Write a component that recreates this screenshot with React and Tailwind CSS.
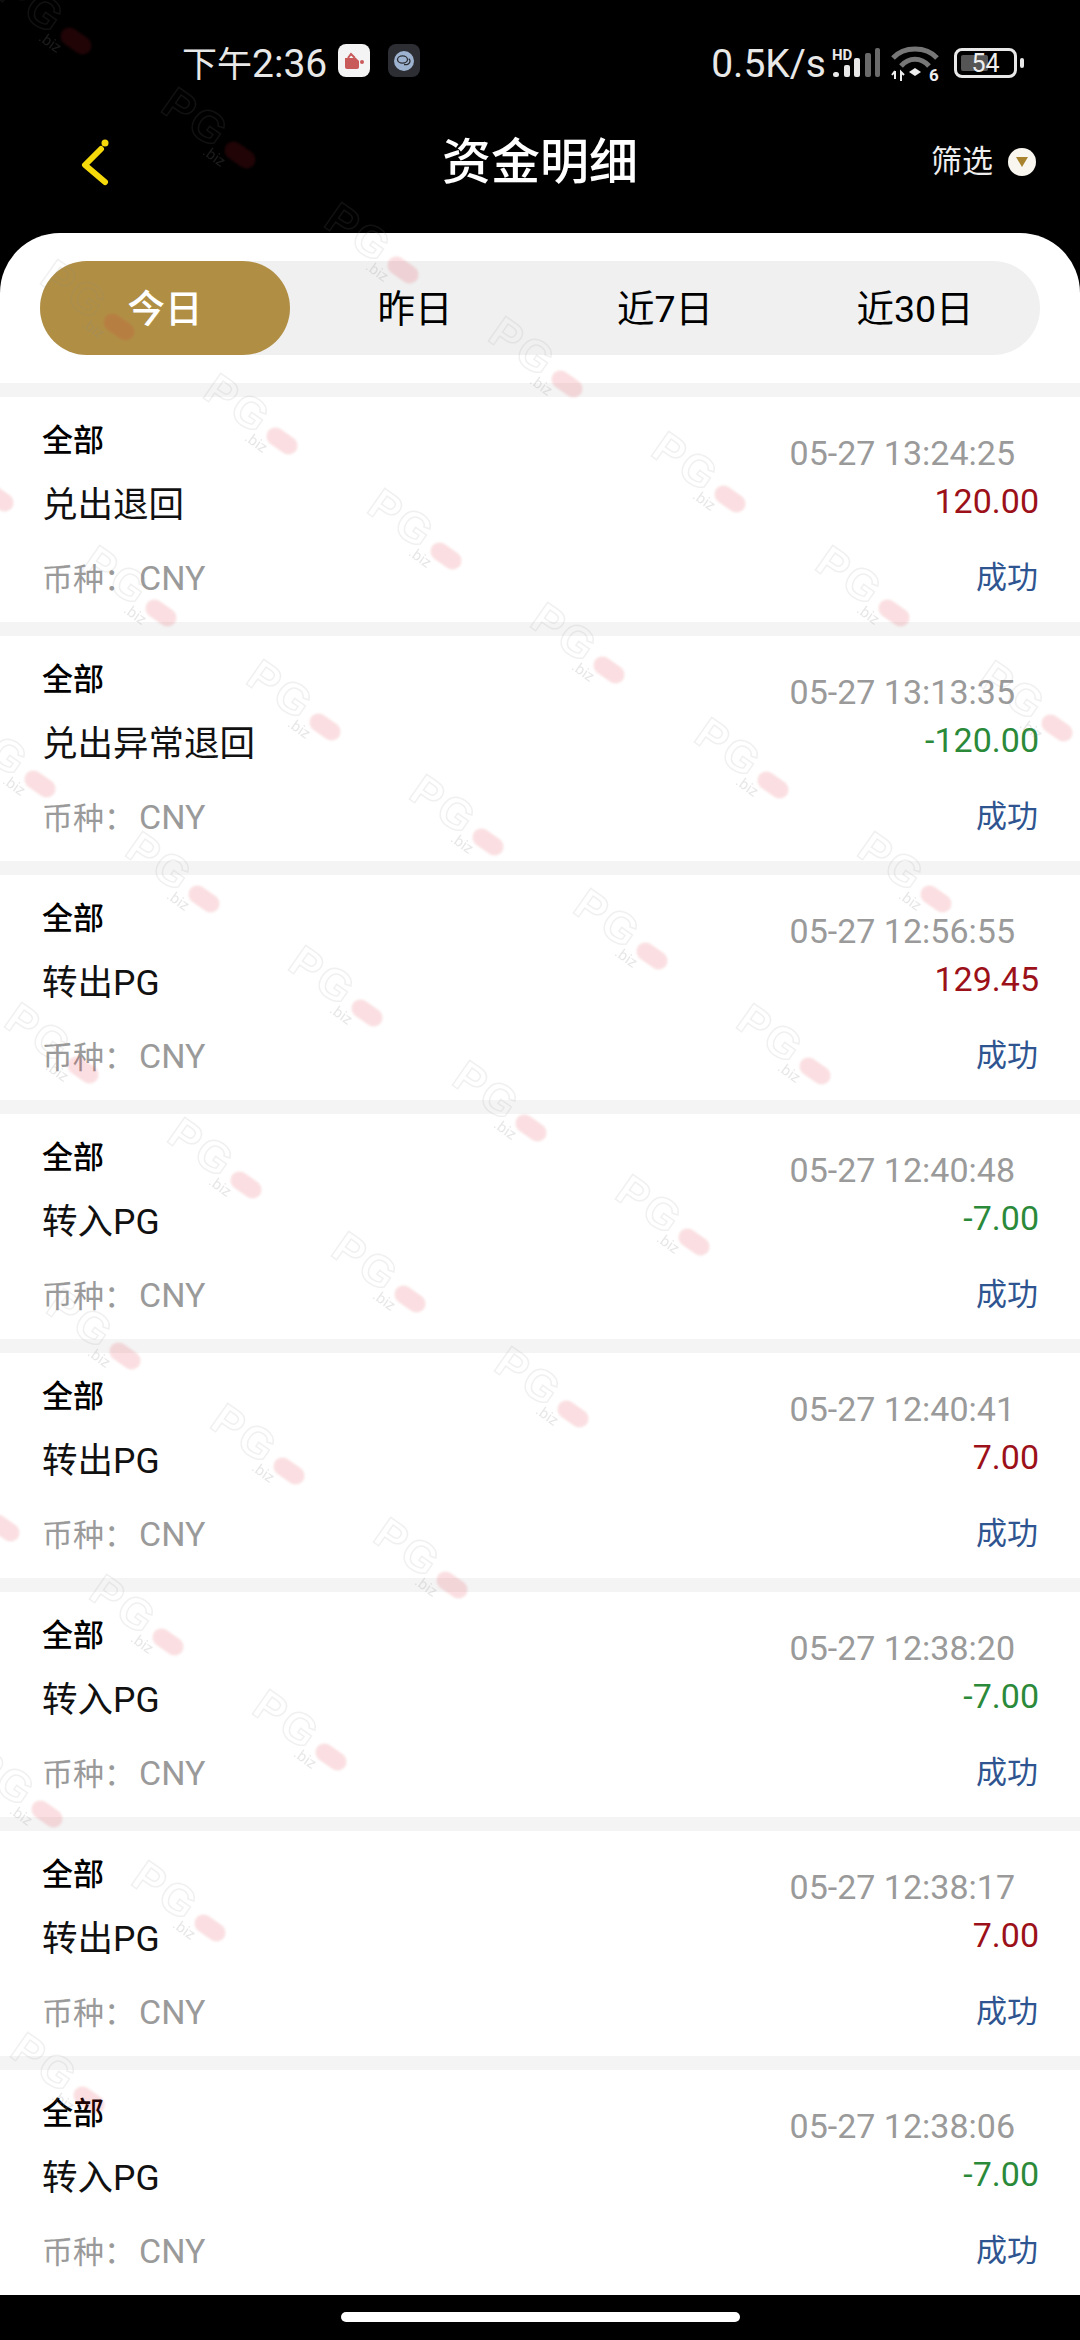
const tabs = ["今日", "昨日", "近7日", "近30日"];

const registros = [
  { tipo: "兑出退回", fecha: "05-27 13:24:25", monto: "120.00" },
  { tipo: "兑出异常退回", fecha: "05-27 13:13:35", monto: "-120.00" },
  { tipo: "转出PG", fecha: "05-27 12:56:55", monto: "129.45" },
  { tipo: "转入PG", fecha: "05-27 12:40:48", monto: "-7.00" },
  { tipo: "转出PG", fecha: "05-27 12:40:41", monto: "7.00" },
  { tipo: "转入PG", fecha: "05-27 12:38:20", monto: "-7.00" },
  { tipo: "转出PG", fecha: "05-27 12:38:17", monto: "7.00" },
  { tipo: "转入PG", fecha: "05-27 12:38:06", monto: "-7.00" },
];

// watermark block: 7 x 9 rotated grid, x/y are the red pill centres
const marcas = [];
for (let m = -2; m <= 4; m++) {
  for (let n = -1; n <= 7; n++) {
    const x = 282 + 163.5 * m - 121 * n;
    const y = 441 + 114.5 * m + 171.5 * n;
    if (x > -40 && x < 1180 && y > -40 && y < 2296) marcas.push({ x, y });
  }
}

function Marca({ x, y }) {
  return (
    <div className="absolute w-0 h-0 rotate-[35deg]" style={{ left: x, top: y }}>
      <span className="absolute left-[-92px] top-[-27px] text-[44px] leading-[44px] font-bold font-['Liberation_Sans',sans-serif] text-transparent tracking-[3px] opacity-[0.12] [-webkit-text-stroke:1.5px_#888]">
        PG
      </span>
      <span className="absolute left-[-17px] top-[-9px] w-[34px] h-[18px] rounded-full bg-[#e02030] opacity-[0.14] blur-[1px]" />
      <span className="absolute left-[-32px] top-[9px] text-[15px] leading-[15px] text-[#888] opacity-[0.2]">
        .biz
      </span>
    </div>
  );
}

function BarraEstado() {
  return (
    <div className="h-[126px] flex justify-between pt-[44px] pl-[182px] pr-[56px] text-[#e8e8e8]">
      <div className="flex items-start">
        <span className="text-[35px] leading-[40px]">
          下午<span className="text-[39px]">2:36</span>
        </span>
        <div className="ml-[11px] w-[32px] h-[33px] rounded-[8px] bg-[#f4f4f4] flex items-center justify-center">
          <svg width="22" height="20" viewBox="0 0 22 20">
            <path d="M2 7h11l3 3v6a2 2 0 0 1-2 2H4a2 2 0 0 1-2-2z" fill="#c95a5a" />
            <path d="M5 7l3-4 4 4" fill="none" stroke="#c95a5a" strokeWidth="2" />
            <circle cx="19" cy="11" r="2" fill="#c95a5a" />
          </svg>
        </div>
        <div className="ml-[18px] w-[32px] h-[33px] rounded-[8px] bg-[#2c2e33] flex items-center justify-center">
          <svg width="22" height="22" viewBox="0 0 22 22">
            <circle cx="11" cy="11" r="10" fill="#9db2cf" />
            <ellipse cx="9.5" cy="9.5" rx="5" ry="3.6" fill="none" stroke="#2c2e33" strokeWidth="1.3" />
            <path d="M11 14.5c3 .6 6-.6 6-3.3 0-1-.5-1.800-1.300-2.400" fill="none" stroke="#2c2e33" strokeWidth="1.300" />
          </svg>
        </div>
      </div>
      <div className="flex items-start">
        <span className="text-[39px] leading-[40px]">0.5K/s</span>
        <svg width="50" height="38" viewBox="0 0 50 38" className="ml-[4px] mt-[3px]">
          <text x="2" y="13" fontSize="15" fontWeight="700" fill="#e8e8e8" fontFamily="Roboto, sans-serif">HD</text>
          <rect x="3" y="25" width="6" height="5" rx="2.500" fill="#e8e8e8" />
          <rect x="14" y="18" width="6" height="12" rx="2" fill="#e8e8e8" />
          <rect x="24" y="11" width="6" height="19" rx="2" fill="#e8e8e8" />
          <rect x="35" y="6" width="6" height="24" rx="2" fill="#6a6a6a" />
          <rect x="45" y="1" width="5" height="29" rx="2" fill="#6a6a6a" />
        </svg>
        <svg width="50" height="38" viewBox="0 0 50 38" className="ml-[11px] mt-[1px]">
          <path d="M2 13C13 1 35 1 46 13" fill="none" stroke="#777" strokeWidth="5" />
          <path d="M10 21C18 12 30 12 38 21" fill="none" stroke="#777" strokeWidth="5" />
          <path d="M24 23l6 4-6 4-6-4z" fill="#eee" />
          <path d="M4 26v8M1 30l3-4M10 36v-9l3 3" fill="none" stroke="#eee" strokeWidth="2" />
          <text x="38" y="36" fontSize="17" fontWeight="700" fill="#eee" fontFamily="Roboto, sans-serif">6</text>
        </svg>
        <div className="ml-[13px] mt-[4px] w-[63px] h-[30px] rounded-[8px] border-[3px] border-[#e8e8e8] p-[4px] relative flex">
          <div className="w-[27px] bg-[#555] rounded-[2px]" />
          <span className="absolute inset-0 flex items-center justify-center text-[25px] leading-none text-[#eee]">
            54
          </span>
        </div>
        <div className="ml-[3px] mt-[14px] w-[4px] h-[10px] rounded-full bg-[#e8e8e8]" />
      </div>
    </div>
  );
}

function Cabecera() {
  return (
    <div className="h-[107px] grid grid-cols-[1fr_auto_1fr] items-start text-white">
      <div className="pl-[80px] pt-[12px]">
        <svg width="30" height="48" viewBox="0 0 30 48">
          <path d="M21 11L5 27l20 17" fill="none" stroke="#f5d90a" strokeWidth="6" strokeLinecap="round" strokeLinejoin="round" />
          <circle cx="25" cy="5" r="3.500" fill="#f5d90a" />
        </svg>
      </div>
      <h1 className="text-[49px] leading-[56px] font-medium mt-[9px]">资金明细</h1>
      <div className="flex justify-end items-center pr-[44px] pt-[18px]">
        <span className="text-[31px] leading-[36px] text-[#eee]">筛选</span>
        <div className="ml-[15px] w-[28px] h-[28px] rounded-full bg-[#f8f6ee] flex items-center justify-center">
          <svg width="14" height="12" viewBox="0 0 14 12">
            <path d="M1 1h12L7 11z" fill="#a9822e" />
          </svg>
        </div>
      </div>
    </div>
  );
}

function Registro({ tipo, fecha, monto }) {
  const negativo = monto.startsWith("-");
  return (
    <div className="h-[225px] bg-white pl-[42px] pr-[41px] flex justify-between">
      <div className="pt-[22px]">
        <p className="text-[31px] leading-[44px] font-medium text-black">全部</p>
        <p className="text-[35.5px] leading-[44px] mt-[20px] text-[#111]">{tipo}</p>
        <p className="text-[31px] leading-[44px] mt-[29px] text-[#9a9a9a]">
          币种：<span className="text-[34px] ml-[4px]">CNY</span>
        </p>
      </div>
      <div className="pt-[36px] flex flex-col items-end">
        <p className="text-[34px] leading-[40px] mr-[24px] text-[#9a9a9a]">{fecha}</p>
        <p className={`text-[34px] leading-[40px] mt-[8px] ${negativo ? "text-[#2b8a3a]" : "text-[#9c1119]"}`}>
          {monto}
        </p>
        <p className="text-[31px] leading-[44px] mt-[35px] mr-[1px] text-[#2f5591]">成功</p>
      </div>
    </div>
  );
}

export default function App() {
  return (
    <div className="relative w-[1080px] h-[2340px] bg-black overflow-hidden font-['Roboto','Noto_Sans_CJK_SC',sans-serif]">
      <BarraEstado />
      <Cabecera />

      <div className="bg-white rounded-t-[60px]">
        <div className="px-[40px] py-[28px]">
          <div className="h-[94px] rounded-full bg-[#f0f0f0] grid grid-cols-4 text-[37.5px]">
            {tabs.map((tab, i) => (
              <div
                key={tab}
                className={`flex items-center justify-center rounded-full pt-[2px] ${
                  i === 0 ? "bg-[#b08f45] text-white font-medium" : "text-black"
                }`}
              >
                {tab}
              </div>
            ))}
          </div>
        </div>

        <div className="bg-[#f4f4f4] pt-[14px] flex flex-col gap-[14px]">
          {registros.map((r, i) => (
            <Registro key={i} {...r} />
          ))}
        </div>
      </div>

      <div className="h-[44px] flex justify-center pt-[17px]">
        <div className="w-[399px] h-[10px] rounded-full bg-white" />
      </div>

      {/* marca de agua */}
      <div className="absolute left-0 top-0 w-[1080px] h-[2296px] overflow-hidden pointer-events-none">
        {marcas.map((p, i) => (
          <Marca key={i} x={p.x} y={p.y} />
        ))}
      </div>
    </div>
  );
}
